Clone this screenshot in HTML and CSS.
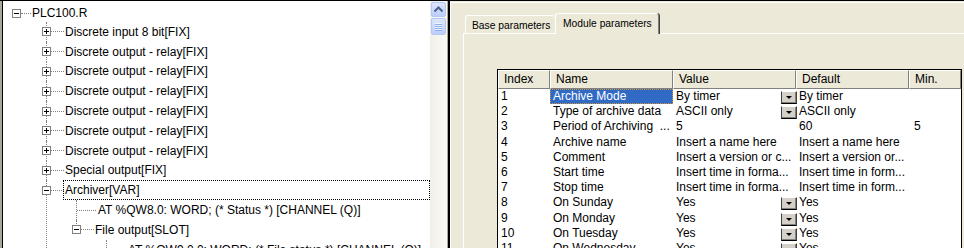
FILE: index.html
```html
<!DOCTYPE html>
<html lang="en">
<head>
  <meta charset="UTF-8">
  <title>PLC100.R configuration</title>
  <link rel="stylesheet" href="styles.css">
</head>
<body>
  <div class="app">
    <div class="edge"></div>

    <!-- Left: module tree -->
    <div class="tree-pane">
      <div class="tree">
        <ul class="root">
          <li>
            <div class="node"><span class="tg open"></span><span class="ln"></span><span class="lbl">PLC100.R</span></div>
            <ul>
              <li><div class="node"><span class="tg"></span><span class="ln"></span><span class="lbl">Discrete input 8 bit[FIX]</span></div></li>
              <li><div class="node"><span class="tg"></span><span class="ln"></span><span class="lbl">Discrete output - relay[FIX]</span></div></li>
              <li><div class="node"><span class="tg"></span><span class="ln"></span><span class="lbl">Discrete output - relay[FIX]</span></div></li>
              <li><div class="node"><span class="tg"></span><span class="ln"></span><span class="lbl">Discrete output - relay[FIX]</span></div></li>
              <li><div class="node"><span class="tg"></span><span class="ln"></span><span class="lbl">Discrete output - relay[FIX]</span></div></li>
              <li><div class="node"><span class="tg"></span><span class="ln"></span><span class="lbl">Discrete output - relay[FIX]</span></div></li>
              <li><div class="node"><span class="tg"></span><span class="ln"></span><span class="lbl">Discrete output - relay[FIX]</span></div></li>
              <li><div class="node"><span class="tg"></span><span class="ln"></span><span class="lbl">Special output[FIX]</span></div></li>
              <li>
                <div class="node"><span class="tg open"></span><span class="ln"></span><span class="lbl focus">Archiver[VAR]</span></div>
                <ul>
                  <li><div class="node leaf"><span class="ln"></span><span class="lbl">AT %QW8.0: WORD; (* Status *) [CHANNEL (Q)]</span></div></li>
                  <li class="last">
                    <div class="node"><span class="tg open"></span><span class="ln"></span><span class="lbl">File output[SLOT]</span></div>
                    <ul>
                      <li class="last"><div class="node leaf"><span class="ln"></span><span class="lbl">AT %QW9.0.0: WORD; (* File status *) [CHANNEL (Q)]</span></div></li>
                    </ul>
                  </li>
                </ul>
              </li>
              <li class="last"><div class="node"><span class="tg"></span><span class="ln"></span><span class="lbl">Network[FIX]</span></div></li>
            </ul>
          </li>
        </ul>
      </div>

      <div class="vscroll">
        <div class="sb-btn">
          <svg width="13" height="13" viewBox="0 0 13 13"><polyline points="2.5,8.5 6.5,4.5 10.5,8.5" fill="none" stroke="#4d6185" stroke-width="2"/></svg>
        </div>
        <div class="sb-thumb"><span class="grip"></span></div>
      </div>
    </div>

    <div class="splitter"></div>

    <!-- Right: properties -->
    <div class="props">
      <div class="tabs">
        <div class="tab">Base parameters</div>
        <div class="tab active">Module parameters</div>
      </div>

      <div class="page">
        <div class="grid">
          <div class="grid-head">
            <div>Index</div><div>Name</div><div>Value</div><div>Default</div><div>Min.</div>
          </div>
          <div class="grid-row"><div>1</div><div class="sel">Archive Mode</div><div class="val">By timer<span class="dd"></span></div><div>By timer</div><div></div></div>
          <div class="grid-row"><div>2</div><div>Type of archive data</div><div class="val">ASCII only<span class="dd"></span></div><div>ASCII only</div><div></div></div>
          <div class="grid-row"><div>3</div><div>Period of Archiving &nbsp;...</div><div class="val">5</div><div>60</div><div class="num">5</div></div>
          <div class="grid-row"><div>4</div><div>Archive name</div><div class="val">Insert a name here</div><div>Insert a name here</div><div></div></div>
          <div class="grid-row"><div>5</div><div>Comment</div><div class="val">Insert a version or c...</div><div>Insert a version or...</div><div></div></div>
          <div class="grid-row"><div>6</div><div>Start time</div><div class="val">Insert time in forma...</div><div>Insert time in form...</div><div></div></div>
          <div class="grid-row"><div>7</div><div>Stop time</div><div class="val">Insert time in forma...</div><div>Insert time in form...</div><div></div></div>
          <div class="grid-row"><div>8</div><div>On Sunday</div><div class="val">Yes<span class="dd"></span></div><div>Yes</div><div></div></div>
          <div class="grid-row"><div>9</div><div>On Monday</div><div class="val">Yes<span class="dd"></span></div><div>Yes</div><div></div></div>
          <div class="grid-row"><div>10</div><div>On Tuesday</div><div class="val">Yes<span class="dd"></span></div><div>Yes</div><div></div></div>
          <div class="grid-row"><div>11</div><div>On Wednesday</div><div class="val">Yes<span class="dd"></span></div><div>Yes</div><div></div></div>
        </div>
      </div>
    </div>
  </div>
</body>
</html>
```

FILE: styles.css
```css
/* Global */
body {
  margin: 0;
  font-family: "Liberation Sans", Arial, sans-serif;
  font-size: 12px;
  color: #000;
  background: #ece9d8;
  overflow: hidden;
}

.app {
  display: flex;
  height: 248px;
  border-top: 1px solid #000;
  box-sizing: border-box;
}

.edge {
  width: 2px;
  background: #aca899;
  flex: none;
}

/* Tree pane */
.tree-pane {
  display: flex;
  border-left: 1px solid #000;
  flex: none;
}

.tree {
  width: 427px;
  background: #fff;
  overflow: hidden;
}

.tree ul {
  list-style: none;
  margin: 0;
  padding: 0 0 0 30px;
}

.tree ul.root {
  padding: 3px 0 0 13px;
}

.tree li {
  position: relative;
}

.tree li li::before {
  content: "";
  position: absolute;
  left: 0;
  top: 0;
  bottom: 0;
  border-left: 1px dotted #808080;
}

.tree li li.last::before {
  bottom: auto;
  height: 10px;
}

.node {
  display: flex;
  align-items: center;
  height: 19.8px;
  margin-left: -4px;
  white-space: nowrap;
}

.root > li > .node {
  height: 18px;
}

.tg {
  position: relative;
  flex: none;
  width: 9px;
  height: 9px;
  box-sizing: border-box;
  border: 1px solid #808080;
  background: #fff;
}

.tg::before,
.tg::after {
  content: "";
  position: absolute;
  background: #000;
}

.tg::before {
  left: 1px;
  top: 3px;
  width: 5px;
  height: 1px;
}

.tg::after {
  left: 3px;
  top: 1px;
  width: 1px;
  height: 5px;
}

.tg.open::after {
  display: none;
}

.ln {
  flex: none;
  width: 13px;
  height: 0;
  border-top: 1px dotted #808080;
  margin-right: 1px;
}

.root > li > .node .ln {
  width: 10px;
}

.leaf .ln {
  width: 19px;
  margin-left: 5px;
  margin-right: 2px;
}

.lbl.focus {
  flex: 1;
  align-self: stretch;
  display: flex;
  align-items: center;
  border: 1px dotted #000;
  margin-left: -2px;
  padding-left: 1px;
}

/* Scrollbar */
.vscroll {
  width: 17px;
  box-sizing: border-box;
  padding: 1px 0 0 1px;
  background: linear-gradient(to right, #f0efe8, #fbfaf6);
}

.sb-btn,
.sb-thumb {
  width: 15px;
  box-sizing: border-box;
  border: 1px solid #b4c8f4;
  border-radius: 2px;
  background: linear-gradient(#dbe6fe, #bccefa);
}

.sb-btn {
  height: 15px;
}

.sb-btn svg {
  display: block;
}

.sb-thumb {
  height: 17px;
  margin-top: 1px;
  display: flex;
  justify-content: center;
  align-items: center;
}

.grip {
  width: 7px;
  height: 8px;
  background: repeating-linear-gradient(#eef4fe 0 1px, #8cacea 1px 2px);
}

.splitter {
  flex: none;
  width: 2px;
  background: #000;
  border-left: 1px solid #aca899;
}

/* Properties pane */
.props {
  flex: 1;
  min-width: 0;
  overflow: hidden;
  border-left: 1px solid #fff;
  padding: 12px 0 0 12px;
  box-shadow: inset 0 1px 0 #ece9d8, inset 0 2px 0 #fff;
}

.tabs {
  display: flex;
  align-items: flex-end;
  height: 21px;
  padding-left: 2px;
  font-size: 10.3px;
  line-height: 13px;
  white-space: nowrap;
}

.tab {
  box-sizing: border-box;
  width: 90px;
  height: 18px;
  margin-bottom: 1px;
  padding: 3px 0 0 6px;
  border-top: 1px solid #fff;
  border-left: 1px solid #fff;
  border-radius: 3px 3px 0 0;
  background: #ece9d8;
}

.tab.active {
  position: relative;
  z-index: 1;
  width: 104px;
  height: 21px;
  margin-bottom: 0;
  padding-left: 7px;
  border-right: 1px solid #808080;
  box-shadow: 1px 0 0 #404040;
}

.page {
  margin-top: -1px;
  border-top: 1px solid #fff;
  border-left: 1px solid #fff;
  padding: 35px 0 0 33px;
  height: 300px;
}

/* Parameter grid */
.grid {
  width: 465px;
  box-sizing: border-box;
  border: 1px solid #000;
  background: #fff;
  font-size: 12px;
}

.grid-head,
.grid-row {
  display: grid;
  grid-template-columns: 52px 123px 123px 113px 52px;
}

.grid-head > div {
  height: 19px;
  box-sizing: border-box;
  padding-left: 5px;
  line-height: 17px;
  background: #ece9d8;
  border-top: 1px solid #fff;
  border-left: 1px solid #fff;
  border-right: 1px solid #808080;
  border-bottom: 1px solid #808080;
}

.grid-row > div {
  position: relative;
  height: 15.2px;
  line-height: 15.2px;
  padding-left: 3px;
  white-space: nowrap;
}

.grid-row > .num {
  padding-left: 5px;
}

.grid-row > .sel {
  box-sizing: border-box;
  padding-left: 2px;
  line-height: 13.2px;
  color: #fff;
  background: #316ac5;
  border: 1px dotted #ce953a;
}

.dd {
  position: absolute;
  right: -1px;
  top: 2px;
  width: 16px;
  height: 13px;
  box-sizing: border-box;
  background: #d4d0c8;
  border: 1px solid;
  border-color: #fff #404040 #000 #404040;
  box-shadow: inset -1px -1px 0 #808080;
}

.dd::after {
  content: "";
  position: absolute;
  left: 4px;
  top: 4px;
  border: 3px solid transparent;
  border-top-color: #000;
  border-bottom: 0;
}
```
